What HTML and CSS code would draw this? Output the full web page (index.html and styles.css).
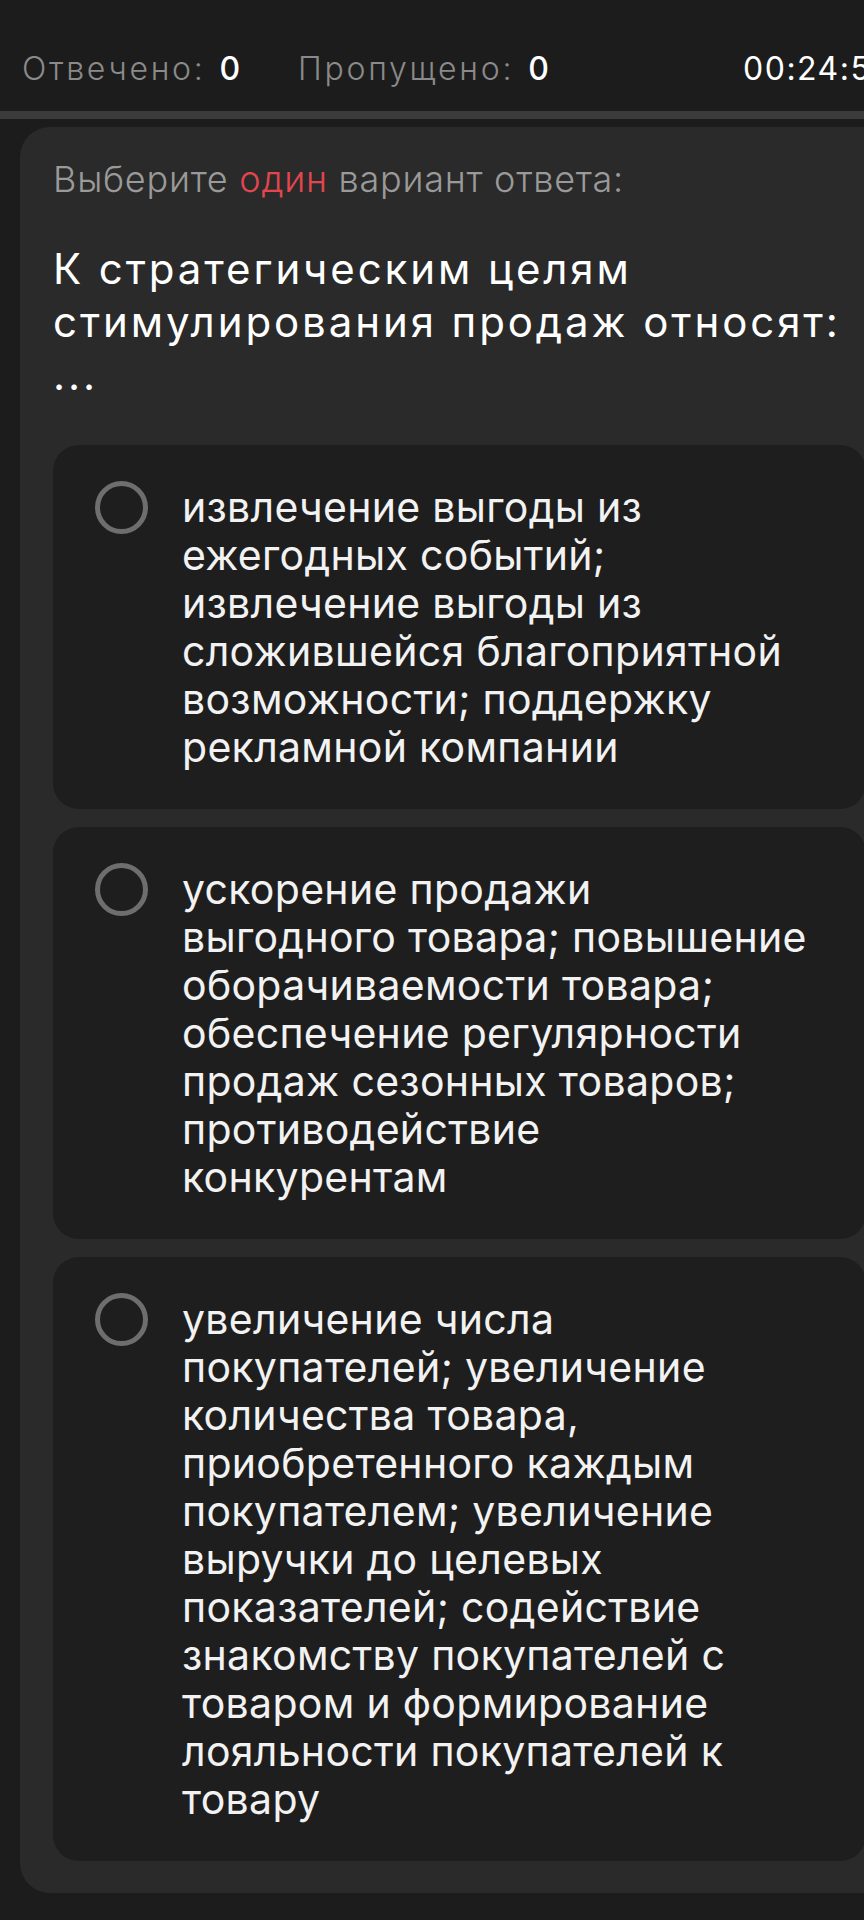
FILE: index.html
```html
<!DOCTYPE html>
<html lang="ru">
<head>
<meta charset="utf-8">
<title>Тест</title>
<link rel="stylesheet" href="styles.css">
</head>
<body>
<div class="page">
  <header class="header">
    <div class="stats">
      <span class="stat"><span class="label">Отвечено:</span> <span class="value">0</span></span>
      <span class="stat"><span class="label">Пропущено:</span> <span class="value">0</span></span>
    </div>
    <div class="timer">00:24:56</div>
  </header>
  <div class="progress"></div>
  <main class="card">
    <p class="hint">Выберите <span class="accent">один</span> вариант ответа:</p>
    <h1 class="question">К стратегическим целям стимулирования продаж относят: ...</h1>
    <div class="options">
      <div class="option">
        <span class="radio"></span>
        <p class="option-text">извлечение выгоды из ежегодных событий; извлечение выгоды из сложившейся благоприятной возможности; поддержку рекламной компании</p>
      </div>
      <div class="option">
        <span class="radio"></span>
        <p class="option-text">ускорение продажи <span class="keep">выгодного товара; повышение</span> оборачиваемости товара; обеспечение регулярности продаж сезонных товаров; противодействие конкурентам</p>
      </div>
      <div class="option">
        <span class="radio"></span>
        <p class="option-text">увеличение числа покупателей; увеличение количества товара, приобретенного каждым покупателем; увеличение выручки до целевых показателей; содействие знакомству покупателей с товаром и формирование лояльности покупателей к товару</p>
      </div>
    </div>
  </main>
</div>
</body>
</html>
```

FILE: styles.css
```css
html, body {
  margin: 0;
  padding: 0;
  background: #1c1c1c;
  overflow: hidden;
}

body {
  font-family: Inter, "Open Sans", sans-serif;
  color: #f2f2f2;
}

.page {
  width: 900px;
}

.header {
  box-sizing: border-box;
  height: 111px;
  padding: 47px 0 0 22px;
  display: grid;
  grid-template-columns: 721px auto;
  font-size: 32px;
  line-height: 44px;
  white-space: nowrap;
}

.stats {
  display: flex;
  gap: 58px;
}

.label {
  color: #8a8a8a;
  font-weight: 300;
  letter-spacing: 2.7px;
}

.value {
  color: #ffffff;
  font-weight: 500;
  margin-left: 5px;
}

.timer {
  color: #ffffff;
  font-weight: 400;
  letter-spacing: 1.5px;
}

.progress {
  height: 8px;
  background: #3b3b3b;
}

.card {
  display: block;
  margin: 8px 0 0 20px;
  width: 879px;
  box-sizing: border-box;
  background: #2a2a2a;
  border-radius: 30px;
  padding: 28px 33px 32px 33px;
}

.hint {
  margin: 0;
  font-size: 36px;
  line-height: 48px;
  font-weight: 300;
  letter-spacing: 0.75px;
  color: #9a9a9a;
}

.accent {
  color: #e2464f;
}

.question {
  margin: 39px 0 0 0;
  font-size: 42px;
  line-height: 53px;
  font-weight: 400;
  letter-spacing: 2.9px;
  color: #ffffff;
}

.options {
  margin-top: 44px;
  display: flex;
  flex-direction: column;
  gap: 18px;
}

.option {
  display: flex;
  align-items: flex-start;
  gap: 34px;
  background: #1e1e1e;
  border-radius: 26px;
  padding: 38px 60px 38px 42px;
}

.radio {
  flex: none;
  box-sizing: border-box;
  width: 53px;
  height: 53px;
  margin-top: -2px;
  border: 5px solid #6e6e6e;
  border-radius: 50%;
}

.option-text {
  margin: 0;
  font-size: 41px;
  line-height: 48px;
  letter-spacing: 0.3px;
  color: #f2f2f2;
}

.keep {
  white-space: nowrap;
}
```
